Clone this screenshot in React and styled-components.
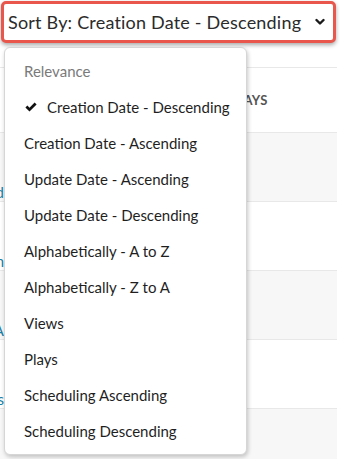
import React from 'react';
import styled, { createGlobalStyle } from 'styled-components';

const GlobalStyle = createGlobalStyle`
  html, body {
    margin: 0;
    padding: 0;
    background: #ffffff;
    font-family: 'Lato', 'Liberation Sans', sans-serif;
  }
`;

const Page = styled.div`
  position: relative;
  width: 340px;
  height: 459px;
  overflow: hidden;
  background: #ffffff;
`;

const SelectFrame = styled.div`
  margin: 1px 4px 0 1px;
  height: 36px;
  border: 3px solid #e8564c;
  border-radius: 5px;
  box-shadow: 0 2px 4px rgba(0, 0, 0, 0.35);
  background: #ffffff;
  display: flex;
  align-items: center;
  justify-content: space-between;
  padding: 0 8px 0 4px;
`;

const SelectLabel = styled.span`
  font-size: 18px;
  color: #2b2b2b;
  letter-spacing: 0.2px;
  white-space: nowrap;
`;

const Table = styled.div`
  margin-top: 24px;
  width: 337px;
`;

const HeaderRow = styled.div`
  height: 65px;
  border-top: 1px solid #e8e8e8;
  display: flex;
  align-items: center;
  padding-left: 228px;
  box-sizing: border-box;
  font-size: 13px;
  font-weight: 700;
  color: #555555;
  letter-spacing: 0.3px;
`;

const Row = styled.div`
  height: ${({ h }) => h || 69}px;
  border-top: 1px solid #e8e8e8;
  background: ${({ shaded }) => (shaded ? '#f7f7f7' : '#ffffff')};
  box-sizing: border-box;
  display: flex;
  align-items: flex-end;
`;

const LinkCell = styled.div`
  width: 4px;
  overflow: hidden;
  display: flex;
  justify-content: flex-end;
  font-size: 15px;
  line-height: 18px;
  color: #1b7fa6;
  white-space: nowrap;
`;

const Menu = styled.ul`
  position: absolute;
  left: 4px;
  top: 47px;
  width: 243px;
  margin: 0;
  padding: 5px 0;
  list-style: none;
  background: #ffffff;
  border: 1px solid #d6d6d6;
  border-radius: 6px;
  box-shadow: 1px 2px 4px rgba(0, 0, 0, 0.22);
  box-sizing: border-box;
`;

const Item = styled.li`
  height: 36px;
  display: flex;
  align-items: center;
  padding-left: ${({ checked }) => (checked ? 20 : 19)}px;
  font-size: 15px;
  color: ${({ muted }) => (muted ? '#7a7a7a' : '#1f1f1f')};
  white-space: nowrap;
`;

const Check = styled.svg`
  width: 12px;
  height: 12px;
  margin-right: 10px;
  flex-shrink: 0;
`;

const options = [
  'Creation Date - Ascending',
  'Update Date - Ascending',
  'Update Date - Descending',
  'Alphabetically - A to Z',
  'Alphabetically - Z to A',
  'Views',
  'Plays',
  'Scheduling Ascending',
  'Scheduling Descending',
];

const rows = [
  { shaded: true, link: 'Record' },
  { shaded: false, link: 'Stream' },
  { shaded: true, link: 'MA' },
  { shaded: false, link: 'Class' },
  { shaded: true, link: '', h: 60 },
];

const App = () => {
  return (
    <Page>
      <GlobalStyle />
      <SelectFrame>
        <SelectLabel>Sort By: Creation Date - Descending</SelectLabel>
        <svg width="10" height="8" viewBox="0 0 10 8">
          <polyline points="1.5,2 5,5.5 8.5,2" fill="none" stroke="#1a1a1a" strokeWidth="2.4" strokeLinecap="round" strokeLinejoin="round" />
        </svg>
      </SelectFrame>

      <Table>
        <HeaderRow>PLAYS</HeaderRow>
        {rows.map((r, i) => (
          <Row key={i} shaded={r.shaded} h={r.h}>
            <LinkCell>{r.link}</LinkCell>
          </Row>
        ))}
      </Table>

      <Menu>
        <Item muted>Relevance</Item>
        <Item checked>
          <Check viewBox="0 0 12 12">
            <path d="M0.4 6.6 L2.4 4.6 L4.5 6.7 L9.6 1.4 L11.6 3.4 L4.5 10.6 Z" fill="#111111" />
          </Check>
          Creation Date - Descending
        </Item>
        {options.map((o) => (
          <Item key={o}>{o}</Item>
        ))}
      </Menu>
    </Page>
  );
};

export default App;
